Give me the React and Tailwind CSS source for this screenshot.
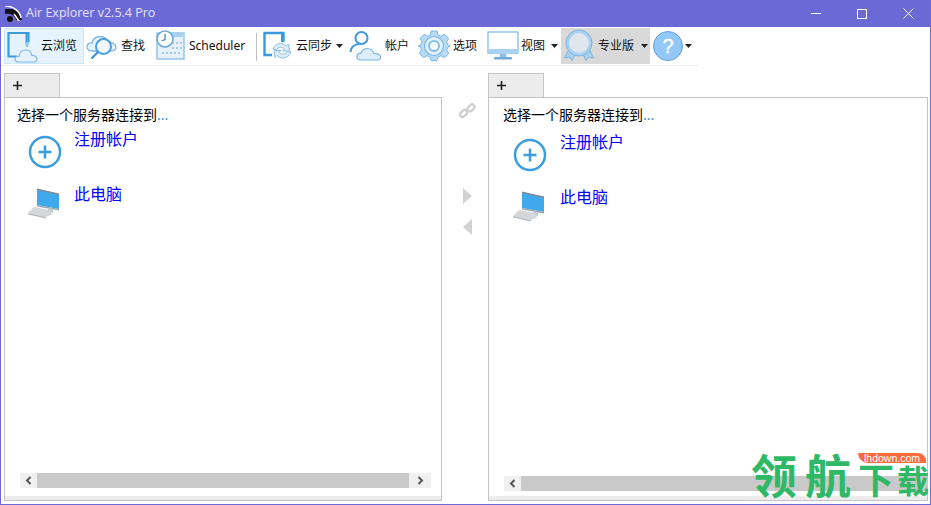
import React from 'react';

const cjk = "font-['Noto_Sans','Noto_Sans_CJK_SC',sans-serif]";

const Caret = () => (
  <svg width="7" height="4" viewBox="0 0 7 4" className="shrink-0">
    <path d="M0 0h7L3.500 4z" fill="#222" />
  </svg>
);

const CloudBrowseIcon = () => (
  <svg width="34" height="34" viewBox="0 0 34 34">
    <path d="M12 27.500H3.500V4h20v9" fill="none" stroke="#3b9bdc" strokeWidth="2.200" />
    <path d="M21.500 4v9" stroke="#3b9bdc" strokeWidth="2" />
    <path d="M20 13h4l-1 5h-2z" fill="#8cc4ec" />
    <path d="M14 33c-3 0-4.500-1.500-4-3.500.4-1.700 2.200-2.500 3.800-2 .7-3.500 3.300-6.500 7-6.500 3.500 0 5.500 2.500 6 5.500 2.700-.3 5.200 1 5.200 3.300 0 2-1.500 3.200-3.500 3.200z" fill="#e6f2fb" stroke="#7fb8e6" strokeWidth="1.200" />
  </svg>
);

const SearchIcon = () => (
  <svg width="34" height="34" viewBox="0 0 34 34">
    <path d="M7 22c-3.500 0-5.500-2.500-5-5 .5-2.500 3-3.500 5-3 1-4 4-6.500 8-6.500 3.500 0 6.500 2 7.500 5.500 4 0 8.500 2 8.500 5 0 2.500-2 4-5 4z" fill="#eaf4fc" stroke="#7fb8e6" strokeWidth="1.300" />
    <circle cx="18.500" cy="17.500" r="7.500" fill="#f2f8fd" stroke="#4a9fdc" strokeWidth="2" />
    <path d="M13 23l-6.500 6.500" stroke="#3b8fd0" strokeWidth="2.200" />
  </svg>
);

const ScheduleIcon = () => (
  <svg width="32" height="32" viewBox="0 0 32 32">
    <rect x="2" y="3" width="27" height="26" fill="#e6f1fb" stroke="#8cc0e8" strokeWidth="1.400" />
    <rect x="3" y="3.500" width="26" height="3.500" fill="#a8d0ef" />
    <g fill="#a9c9e6">
      <rect x="17" y="12" width="2" height="2" /><rect x="21" y="12" width="2" height="2" /><rect x="25" y="12" width="2" height="2" />
      <rect x="17" y="17" width="2" height="2" /><rect x="21" y="17" width="2" height="2" /><rect x="25" y="17" width="2" height="2" />
      <rect x="7" y="22" width="2" height="2" /><rect x="11" y="22" width="2" height="2" /><rect x="15" y="22" width="2" height="2" /><rect x="19" y="22" width="2" height="2" /><rect x="23" y="22" width="2" height="2" />
    </g>
    <circle cx="10" cy="9" r="8" fill="#fff" stroke="#6fa9d8" strokeWidth="1.600" />
    <path d="M10 4v5.500l-3.500 1.500" fill="none" stroke="#4d86b5" strokeWidth="1.300" />
  </svg>
);

const SyncIcon = () => (
  <svg width="32" height="32" viewBox="0 0 32 32">
    <path d="M9 25H1.500V3h19v9" fill="none" stroke="#3b9bdc" strokeWidth="2.400" />
    <path d="M19 3v9" stroke="#3b9bdc" strokeWidth="2" />
    <path d="M10 19c1-3.500 4-5.500 7.500-5.500 2.500 0 4.500 1 6 2.500l2-2 1 7h-7l2-2c-1-1-2.500-1.600-4-1.600-2 0-3.500 1-4.500 2.500z" fill="#dcecf9" stroke="#8cc0e8" strokeWidth="1" />
    <path d="M28 22c-1 3.500-4.500 6-8 6-2.500 0-4.500-1-6-2.500l-2 2-1-7h7l-2 2c1 1 2.500 1.600 4 1.600 2 0 3.500-1 4.500-2.500z" fill="#dcecf9" stroke="#8cc0e8" strokeWidth="1" />
  </svg>
);

const AccountIcon = () => (
  <svg width="34" height="32" viewBox="0 0 34 32">
    <circle cx="12.500" cy="8" r="6" fill="#fff" stroke="#3f9bdc" strokeWidth="2" />
    <path d="M1.500 22c0-4.500 4-8 9-8" fill="none" stroke="#3f9bdc" strokeWidth="2" />
    <path d="M12 30c-3 0-4.500-2-4-4 .4-1.800 2-2.800 3.800-2.500 1-3 3.500-5 6.500-5 3.500 0 6 2.500 6.500 5 3-.5 6.700 1 6.700 3.700 0 1.800-1.500 2.800-3.500 2.800z" fill="#dceefb" stroke="#7fb8e6" strokeWidth="1.200" />
  </svg>
);

const GearIcon = () => (
  <svg width="32" height="32" viewBox="0 0 32 32">
    <path d="M13 1h6l1 4 3 1.300 3.600-2 4 4.200-2 3.500L30 15l2 1-2 1-1.400 3 2 3.500-4 4.200-3.600-2-3 1.300-1 3.500h-6l-1-3.500-3-1.300-3.600 2-4-4.200 2-3.500L2.600 17 0 16l2.600-1 1.400-3-2-3.500 4-4.200 3.600 2 3-1.300z" fill="#b8dbf5" stroke="#7ab8e6" strokeWidth="1" />
    <circle cx="16" cy="16" r="9.500" fill="#e4f1fb" stroke="#7ab8e6" strokeWidth="1.200" />
    <circle cx="16" cy="16" r="5" fill="#f4f9fd" stroke="#86bde8" strokeWidth="2" />
  </svg>
);

const MonitorIcon = () => (
  <svg width="32" height="32" viewBox="0 0 32 32">
    <rect x="1" y="2" width="30" height="21" fill="#fff" stroke="#8cc0e8" strokeWidth="1.400" />
    <rect x="1" y="19" width="30" height="4.500" fill="#a8d0ef" />
    <path d="M13 24h6l.5 3H12.500z" fill="#8cc0e8" />
    <rect x="7" y="27" width="18" height="2.500" rx="1" fill="#6faad8" />
  </svg>
);

const MedalIcon = () => (
  <svg width="32" height="34" viewBox="0 0 32 34">
    <path d="M6 20l-4.500 9 5-1 2.500 3.500 4-8z" fill="#a8d0ef" stroke="#7fb4e0" strokeWidth="1" />
    <path d="M26 20l4.500 9-5-1-2.500 3.500-4-8z" fill="#a8d0ef" stroke="#7fb4e0" strokeWidth="1" />
    <circle cx="16" cy="14" r="13" fill="#a8d2f2" stroke="#7fb4e0" strokeWidth="1" />
    <circle cx="16" cy="14" r="10" fill="#dfe6ed" />
  </svg>
);

const HelpIcon = () => (
  <svg width="32" height="32" viewBox="0 0 32 32">
    <circle cx="16" cy="16" r="14.500" fill="#93c7f7" stroke="#5fa2dc" strokeWidth="1" />
    <text x="16" y="23" textAnchor="middle" fontSize="20" fontWeight="400" fill="#fff" stroke="#fff" strokeWidth=".4" fontFamily="'Liberation Sans', sans-serif">?</text>
  </svg>
);

const PlusCircle = () => (
  <svg width="34" height="34" viewBox="0 0 34 34">
    <circle cx="17" cy="17" r="15" fill="none" stroke="#3a9de0" strokeWidth="2.500" />
    <path d="M17 10.500v13M10.500 17h13" stroke="#3a9de0" strokeWidth="2.500" />
  </svg>
);

const PcIcon = () => (
  <svg width="34" height="32" viewBox="0 0 34 32">
    <path d="M9 2l22 5v15L9 18z" fill="#3fa9ee" />
    <path d="M9 1.500l22 5v1.500L9 3z" fill="#7f8a92" />
    <path d="M9 18l22 4v1.500L9 19.500z" fill="#9aa4ac" />
    <path d="M20 21l5 1v4l-5-1z" fill="#c5ccd2" />
    <path d="M6 20l15 3 3 4.500-6 2.500L0 26z" fill="#d3d7da" />
    <path d="M0 26l18 4v1.500L0 27.500z" fill="#b5babd" />
  </svg>
);

function ToolButton({ icon, label, caret, className = '', gap = 'gap-[3px]', caretGap = 'ml-[4px]' }) {
  return (
    <div className={`flex h-[36px] items-center ${gap} ${className}`}>
      {icon}
      {label && <span className={`text-[12px] leading-none text-[#111] ${cjk}`}>{label}</span>}
      {caret && <span className={caretGap}><Caret /></span>}
    </div>
  );
}

function Tab() {
  return (
    <div className="flex h-[24px] w-[56px] items-center border border-b-0 border-[#c4c4c4] bg-[#ececec] pl-[7px]">
      <svg width="11" height="11" viewBox="0 0 11 11">
        <path d="M5.500 1v9M1 5.500h9" stroke="#222" strokeWidth="1.600" />
      </svg>
    </div>
  );
}

function ScrollBar({ thumbClass, showRight }) {
  return (
    <div className="flex h-[15px] bg-[#f0f0f0]">
      <div className="flex w-[17px] shrink-0 items-center justify-center">
        <svg width="7" height="9" viewBox="0 0 7 9"><path d="M5.500 1L2 4.500 5.500 8" fill="none" stroke="#555" strokeWidth="2" /></svg>
      </div>
      <div className={`bg-[#c9c9c9] ${thumbClass}`} />
      {showRight && (
        <div className="flex flex-1 items-center justify-center">
          <svg width="7" height="9" viewBox="0 0 7 9"><path d="M1.500 1L5 4.500 1.500 8" fill="none" stroke="#555" strokeWidth="2" /></svg>
        </div>
      )}
    </div>
  );
}

function Panel({ width, textLeft, listClass, linkGap, barBottom, thumbClass, showRight, scrollClass }) {
  return (
    <div className={`flex shrink-0 flex-col ${width}`}>
      <Tab />
      <div className="relative flex min-h-0 flex-1 flex-col border border-[#c4c4c4] bg-white">
        <div className={`${textLeft} pt-[7px] text-[14px] leading-[19px] text-black ${cjk}`}>
          选择一个服务器连接到<span className="text-[#3a8fd6]">...</span>
        </div>
        <div className={`flex flex-col ${listClass}`}>
          <div className={`flex h-[55px] items-start ${linkGap}`}>
            <div className="mt-[6px]"><PlusCircle /></div>
            <span className={`-mt-px text-[16px] leading-[22px] text-[#0000ff] ${cjk}`}>注册帐户</span>
          </div>
          <div className={`flex items-start ${linkGap}`}>
            <div className="mt-[3px]"><PcIcon /></div>
            <span className={`-mt-px text-[16px] leading-[22px] text-[#0000ff] ${cjk}`}>此电脑</span>
          </div>
        </div>
        <div className={`mt-auto ${barBottom}`}>
          <div className={scrollClass}>
            <ScrollBar thumbClass={thumbClass} showRight={showRight} />
          </div>
        </div>
        <div className="h-[4px] shrink-0 bg-[#ececec]" />
      </div>
    </div>
  );
}

export default function App() {
  return (
    <div className="relative flex h-[505px] w-[931px] flex-col overflow-hidden border border-t-0 border-[#6c6bd6] bg-white">
      {/* title bar */}
      <div className="-mx-px flex h-[27px] shrink-0 items-center bg-[#6b69d6] pl-[5px]">
        <svg width="17" height="17" viewBox="0 0 17 17" className="mt-[1px]">
          <path d="M0 3h6c5 0 10 4 11 11h-6C10 10 6 7 0 8z" fill="#111" />
          <path d="M0 0c8 0 15 5 16 12" fill="none" stroke="#fff" strokeWidth="1.500" />
          <circle cx="5" cy="13" r="3" fill="#111" />
          <path d="M9 8l5 7" stroke="#fff" strokeWidth="1.500" />
        </svg>
        <span className="ml-[4px] font-['Open_Sans',sans-serif] text-[12.500px] leading-none text-[#e4e4f8]">Air Explorer v2.5.4 Pro</span>
        <div className="ml-auto flex h-full items-center">
          <div className="flex h-full w-[46px] items-center justify-center">
            <div className="h-px w-[10px] bg-white" />
          </div>
          <div className="flex h-full w-[46px] items-center justify-center">
            <div className="h-[10px] w-[10px] border border-white" />
          </div>
          <div className="flex h-full w-[46px] items-center justify-center">
            <svg width="11" height="11" viewBox="0 0 11 11"><path d="M.5.500l10 10M10.500.500l-10 10" stroke="#fff" strokeWidth="1" /></svg>
          </div>
        </div>
      </div>

      {/* toolbar */}
      <div className="mt-px flex h-[38px] w-[697px] shrink-0 items-start border-b border-[#eeeeee] pl-[3px]">
        <ToolButton icon={<CloudBrowseIcon />} label="云浏览" gap="gap-[2px]" className="w-[80px] border border-[#cce8ff] bg-[#e5f3ff]" />
        <ToolButton icon={<SearchIcon />} label="查找" gap="gap-[2px]" className="ml-[1px] w-[70px]" />
        <ToolButton icon={<ScheduleIcon />} label="Scheduler" gap="gap-[2px]" className="w-[98px]" />
        <div className="ml-[3px] mr-[6px] mt-[5px] h-[28px] w-px bg-[#c0c0c0]" />
        <ToolButton icon={<SyncIcon />} label="云同步" caret gap="gap-[1px]" caretGap="ml-[3px]" className="w-[86px]" />
        <ToolButton icon={<AccountIcon />} label="帐户" gap="gap-[2px]" className="w-[69px]" />
        <ToolButton icon={<GearIcon />} label="选项" className="w-[69px]" />
        <ToolButton icon={<MonitorIcon />} label="视图" caret gap="gap-[2px]" className="w-[74px]" />
        <ToolButton icon={<MedalIcon />} label="专业版" caret gap="gap-[3px]" className="w-[89px] bg-[#d9d9d9] pl-[2px]" />
        <ToolButton icon={<HelpIcon />} caret caretGap="ml-0" gap="gap-[1px]" className="ml-[2px]" />
      </div>

      {/* panels */}
      <div className="flex min-h-0 flex-1 pb-[3px] pl-[3px] pt-[7px]">
        <Panel width="w-[438px]" textLeft="pl-[12px]" listClass="mt-[5px] pl-[23px]" linkGap="gap-[12px]" barBottom="mb-[8px]" thumbClass="w-[372px]" showRight scrollClass="ml-[15px] mr-[10px]" />
        <div className="flex w-[46px] shrink-0 flex-col items-center pl-[4px] pt-[29px]">
          <svg width="18" height="18" viewBox="0 0 18 18">
            <g fill="none" stroke="#cdcdcd" strokeWidth="2.200">
              <rect x="1.500" y="9" width="8" height="5" rx="2.500" transform="rotate(-45 5.500 11.500)" />
              <rect x="9" y="3.500" width="8" height="5" rx="2.500" transform="rotate(-45 13 6)" />
            </g>
          </svg>
          <svg width="9" height="16" viewBox="0 0 9 16" className="ml-[1px] mt-[68px]"><path d="M0 0l9 8-9 8z" fill="#d2d2d2" /></svg>
          <svg width="9" height="16" viewBox="0 0 9 16" className="mt-[15px]"><path d="M9 0L0 8l9 8z" fill="#d2d2d2" /></svg>
        </div>
        <Panel width="w-[440px]" textLeft="pl-[14px]" listClass="mt-[8px] pl-[24px]" linkGap="gap-[13px]" barBottom="mb-[5px]" thumbClass="flex-1" scrollClass="ml-[15px]" />
      </div>

      {/* watermark */}
      <div className="absolute bottom-[5px] right-0 w-[179px]">
        <div className="absolute left-[107px] top-[6px] z-10 w-[68px] rounded-bl-[10px] rounded-tr-[8px] bg-[#f96a3c] text-center font-['Liberation_Sans',sans-serif] text-[10.500px] leading-[10px] text-white">lhdown.com</div>
        <div className="flex items-end font-['Noto_Sans_CJK_SC',sans-serif] font-bold text-[#2fb866]">
          <span className="w-[54px] shrink-0 text-[46px] leading-[52px]">领</span>
          <span className="w-[53px] shrink-0 text-[46px] leading-[52px]">航</span>
          <span className="w-[39px] shrink-0 text-[36px] leading-[42px]">下</span>
          <span className="w-[33px] shrink-0 text-[32px] leading-[40px]">载</span>
        </div>
      </div>
    </div>
  );
}
